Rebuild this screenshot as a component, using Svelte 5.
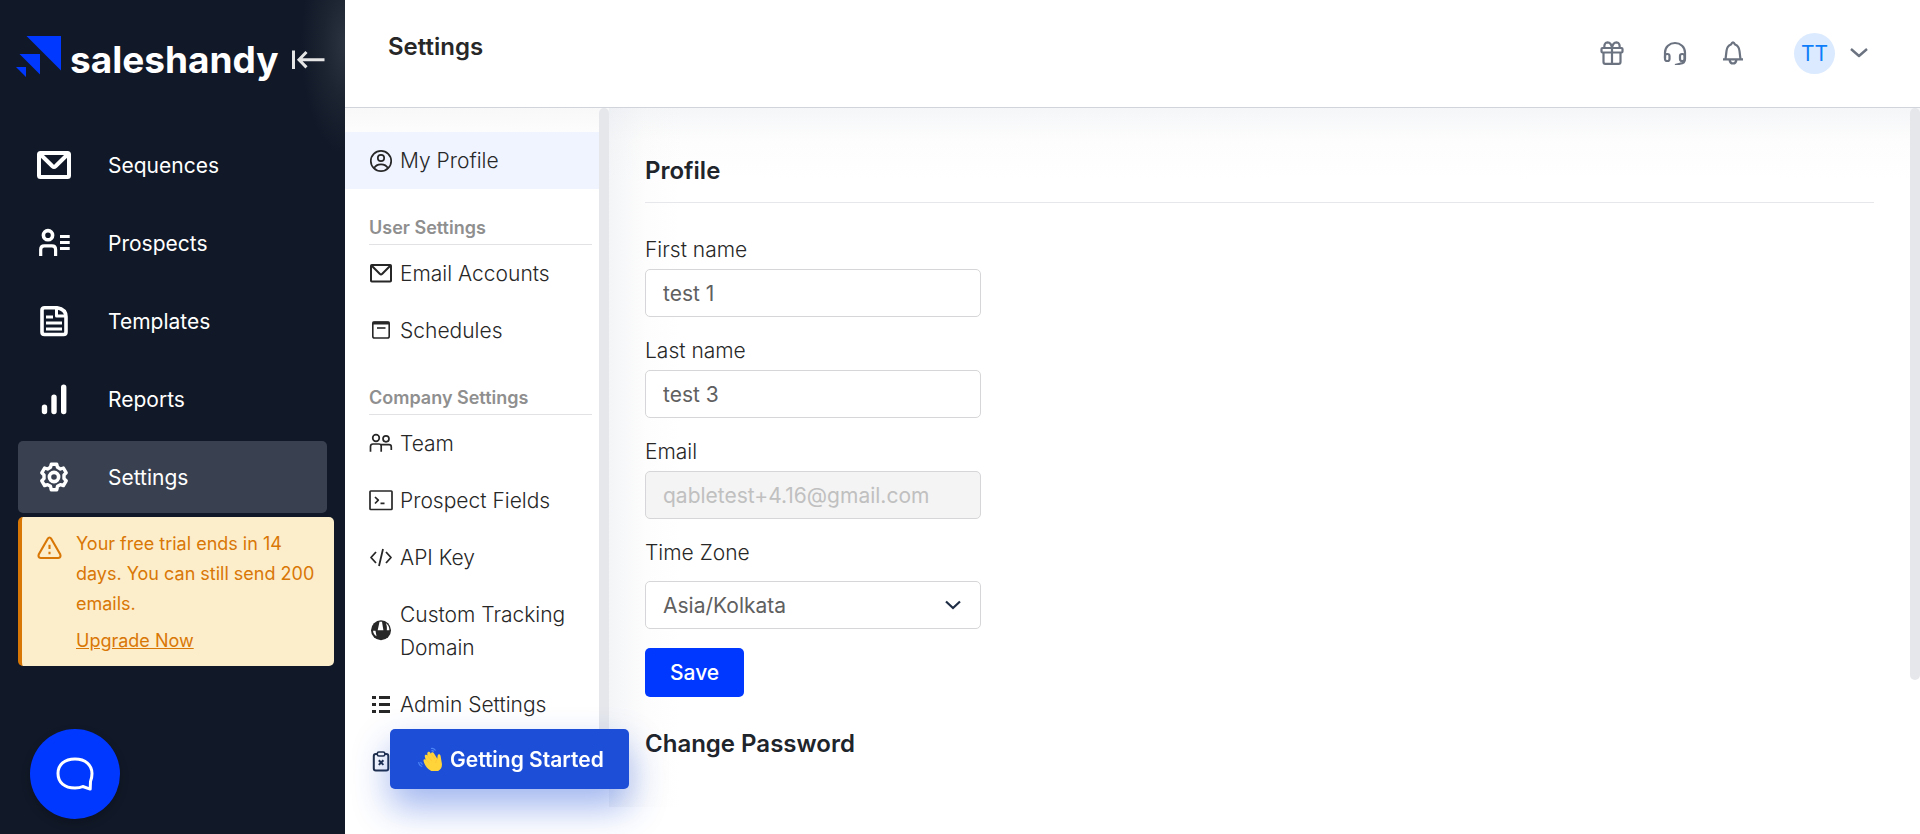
<script>
  let firstName = $state('test 1');
  let lastName = $state('test 3');
  let zone = $state('Asia/Kolkata');

  const nav = [
    { id: 'mail', label: 'Sequences' },
    { id: 'prospects', label: 'Prospects' },
    { id: 'templates', label: 'Templates' },
    { id: 'reports', label: 'Reports' },
    { id: 'gear', label: 'Settings', active: true }
  ];

  const groups = [
    {
      title: 'User Settings',
      items: [
        { id: 'mail', label: 'Email Accounts' },
        { id: 'schedule', label: 'Schedules' }
      ]
    },
    {
      title: 'Company Settings',
      items: [
        { id: 'team', label: 'Team' },
        { id: 'terminal', label: 'Prospect Fields' },
        { id: 'code', label: 'API Key' },
        { id: 'globe', label: 'Custom Tracking Domain' },
        { id: 'list', label: 'Admin Settings' },
        { id: 'clipboard', label: '' }
      ]
    }
  ];
</script>

{#snippet navIcon(id)}
  <svg class="nav-icon" viewBox="0 0 36 36" fill="none" stroke="currentColor" stroke-width="4" stroke-linejoin="round" aria-hidden="true">
    {#if id === 'mail'}
      <rect x="3" y="6" width="30" height="24" rx="1.5" />
      <path d="M4 7l12.500 12.300q1.500 1.400 3 0L32 7" />
    {:else if id === 'prospects'}
      <g stroke-width="3.600">
        <circle cx="12" cy="10.200" r="4.600" />
        <path d="M4.700 31v-6.500q0-3.700 3.700-3.700h7.500q3.700 0 3.700 3.700V31" stroke-width="3.200" />
        <path d="M24 11.500h9.700M24 17.500h9.700M24 23.500h9.700" stroke-width="3" />
      </g>
    {:else if id === 'templates'}
      <path d="M8.500 4.700H21q9 1.500 9 9V29q0 2.500-2.500 2.500h-19Q6 31.500 6 29V7q0-2.300 2.500-2.300z" stroke-width="3.600" />
      <path d="M20.500 4.500V13h9" stroke-width="3" />
      <path d="M10 14h7M10 20h16M10 26h16" stroke-width="3" />
    {:else if id === 'reports'}
      <g stroke-width="5.400" stroke-linecap="round">
        <path d="M8.500 26.300v4.300M18 16.300v14.300M27.700 6.300v24.300" />
      </g>
    {:else}
      <path stroke-width="3.400" d="M14.500 7.500L15.300 4.500h5.400l.8 3 2.900 1.700 3-1 2.800 4.800-2.200 2.200v3.600l2.200 2.200-2.800 4.800-3-1-2.900 1.700-.8 3.500h-5.400l-.8-3.500-2.900-1.700-3 1L5.800 21l2.200-2.200v-3.600L5.800 13l2.800-4.800 3 1z" transform="translate(0 .8)" />
      <circle cx="18" cy="18" r="4.600" stroke-width="3.600" />
    {/if}
  </svg>
{/snippet}

{#snippet menuIcon(id)}
  <svg class="menu-icon" viewBox="0 0 24 24" fill="none" stroke="currentColor" stroke-width="2" stroke-linejoin="round" aria-hidden="true">
    {#if id === 'user'}
      <g stroke-width="1.700"><circle cx="12" cy="12" r="10.200" /><circle cx="12" cy="9" r="3.200" /><path d="M5 19.300q2-4 7-4t7 4" /></g>
    {:else if id === 'mail'}
      <rect x="2" y="3" width="20" height="16.500" rx=".8" /><path d="M2.500 3.500l8.200 8.300q1.300 1.200 2.600 0L21.500 3.500" />
    {:else if id === 'schedule'}
      <rect x="3.800" y="3" width="16.400" height="16" rx="1.800" stroke-width="1.600" /><path d="M3.500 4h17" stroke-width="3" /><path d="M8 9h8.500" stroke-width="1.600" />
    {:else if id === 'team'}
      <g stroke-width="1.700"><circle cx="7" cy="6" r="3.300" /><circle cx="17" cy="6.800" r="3" /><path d="M1.500 19.800v-5.300q0-2.500 2.500-2.500h6q2.200 0 2.200 2.200v5.600M12 12.700h8q2.300 0 2.300 2.300v3" /></g>
    {:else if id === 'terminal'}
      <rect x="1" y="2" width="22" height="18.500" rx=".8" stroke-width="1.700" /><path d="M6 8l3.300 3.200L6 14.500M11.500 14.300h4" stroke-width="1.700" />
    {:else if id === 'code'}
      <path d="M7 6L2 11.500 7 17M17 6l5 5.500-5 5.500M14 3l-4 17" stroke-width="1.800" />
    {:else if id === 'globe'}
      <circle cx="12" cy="11.300" r="10" fill="currentColor" stroke="none" />
      <path d="M10.500 2.800L8.700 11.300h5.700L13 2.800zM16.800 4.100c1.200 2.700 1.200 5 1 7.200h2.600c0-3-1.200-5.500-3.600-7.200zM4 11.800h2.500l1 5.500c-2-1.200-3.300-3-3.500-5.500z" fill="#fff" stroke="none" />
    {:else if id === 'list'}
      <path d="M3 4.500h4M3 11.500h4M3 18.500h4M10 4.500h11M10 11.500h11M10 18.500h11" stroke-width="3" />
    {:else}
      <g stroke="#1f2d44"><rect x="4.800" y="4" width="14.500" height="16.500" rx="2" /><rect x="8.300" y="2" width="7.500" height="4" rx="1.600" fill="#fff" stroke-width="1.600" /><path d="M9.800 10.300l4.600 4.600M14.400 10.300l-4.600 4.600" /></g>
    {/if}
  </svg>
{/snippet}

{#snippet menuItem(id, label, active)}
  <a class="menu-item" class:current={active} href="#{id}" aria-label={label || 'More'}>
    {@render menuIcon(id)}
    <span>{label}</span>
  </a>
{/snippet}

<div class="app">
  <aside class="sidebar">
    <div class="brand">
      <svg class="logo" viewBox="0 0 46 42" aria-hidden="true">
        <path d="M10.500 0H45v34.500zM3.500 18H24v20.500zM0 31h10v10z" fill="#0038ff" />
      </svg>
      <span class="wordmark">saleshandy</span>
      <button class="collapse" aria-label="Collapse menu">
        <svg viewBox="0 0 34 20" fill="none" stroke="#e5e5e5" stroke-width="3" aria-hidden="true">
          <path d="M2.500.5v18.500M33.500 9.700H8M15.500 2L8 9.700l7.500 7.700" />
        </svg>
      </button>
    </div>
    <nav class="main-nav">
      {#each nav as item}
        <a class="nav-item" class:selected={item.active} href="#{item.label}">
          {@render navIcon(item.id)}
          <span>{item.label}</span>
        </a>
      {/each}
    </nav>
    <div class="trial">
      <svg viewBox="0 0 26 24" fill="none" stroke="currentColor" stroke-width="2.200" stroke-linejoin="round" aria-hidden="true">
        <path d="M11.200 2.300q1.800-2.400 3.600 0l9.300 16.200q1.300 3.400-2 3.900H3.900q-3.300-.5-2-3.900z" /><path d="M13 8.500v4.500M13 16v2.500" />
      </svg>
      <div>
        <p>Your free trial ends in 14 days. You can still send 200 emails.</p>
        <a href="#upgrade">Upgrade Now</a>
      </div>
    </div>
  </aside>

  <div class="page">
    <header class="topbar">
      <h1>Settings</h1>
      <div class="tools">
        <button aria-label="Rewards">
          <svg viewBox="0 0 24 24"><rect x="1.500" y="7" width="21" height="4.500" rx="1" /><path d="M3.500 11.500V21q0 1.800 1.800 1.800h13.400q1.800 0 1.800-1.800v-9.500M12 7v15.500M12 7C11.500 3 9.800 1.300 7.500 1.300 4.500 1.500 4 4.500 4.500 7M12 7c.5-4 2.200-5.700 4.500-5.700 3 .2 3.500 3.200 3 5.700" /></svg>
        </button>
        <button aria-label="Support">
          <svg viewBox="0 0 24 24"><path d="M2 17v-5.500C2 6 6.500 2 12 2s10 4 10 9.500V18q0 4.500-5 4.700L12 24" /><rect x="2" y="13" width="4.500" height="7" rx="2" /><rect x="17" y="13" width="4.500" height="7" rx="2" /></svg>
        </button>
        <button aria-label="Notifications">
          <svg viewBox="0 0 24 24"><path d="M2 18.300h20M4.500 18.300L5.500 10q.5-5 4.500-6.500Q11 1.300 12 1.300t2 2.200q4 1.500 4.500 6.500l1 8.300M8.500 18.500q.5 4 3.500 4t3.500-4" /></svg>
        </button>
        <button class="account" aria-label="Account">
          <span class="avatar">TT</span>
          <svg viewBox="0 0 18 18"><path d="M1 5l8 7 8-7" stroke-width="2.400" /></svg>
        </button>
      </div>
    </header>

    <div class="body">
      <div class="settings-nav">
        <nav class="menu">
          {@render menuItem('user', 'My Profile', true)}
          {#each groups as group}
            <h2>{group.title}</h2>
            {#each group.items as item}
              {@render menuItem(item.id, item.label, false)}
            {/each}
          {/each}
        </nav>
        <div class="track menu-track"></div>
      </div>

      <main class="content">
        <form class="profile" onsubmit={(e) => e.preventDefault()}>
          <h2 class="ruled">Profile</h2>
          <div class="field">
            <label for="first">First name</label>
            <input id="first" type="text" bind:value={firstName} />
          </div>
          <div class="field">
            <label for="last">Last name</label>
            <input id="last" type="text" bind:value={lastName} />
          </div>
          <div class="field">
            <label for="email">Email</label>
            <input id="email" type="email" value="qabletest+4.16@gmail.com" disabled />
          </div>
          <div class="field zone">
            <label for="zone">Time Zone</label>
            <div class="select">
              <select id="zone" bind:value={zone}><option>Asia/Kolkata</option></select>
              <svg viewBox="0 0 18 18" fill="none" stroke="#1f2d44" stroke-width="2.200" aria-hidden="true"><path d="M2 5.500l7 6.500 7-6.500" /></svg>
            </div>
          </div>
          <button class="save" type="submit">Save</button>
          <h2>Change Password</h2>
        </form>
        <div class="track main-track"></div>
      </main>
    </div>
  </div>

  <button class="chat" aria-label="Open chat">
    <svg viewBox="0 0 38 34" fill="none" stroke="#fff" stroke-width="3" stroke-linejoin="round" aria-hidden="true">
      <path d="M34.500 24.500l-.3 7.600-7.400-2.600q-3 1.500-7.800 1.500C8.500 31 2 25.500 2 16.500S8.500 2 19 2s17 6 17 14.500q0 4.500-1.500 8z" />
    </svg>
  </button>

  <button class="started">
    <svg viewBox="0 0 24 24" aria-hidden="true">
      <path d="M8.800 21c-2.500-2-4-5.200-4.700-7.700-.5-1.800 1-2.700 2-1.500l-.8-3.300c-.4-1.800 1.800-2.500 2.700-1L7.800 5.700c-.2-1.800 2-2.600 3-1l.6 1c.3-1.500 2-2 3-.5l3.400 5.600.3-3c.3-2 2.600-2.300 3 .3l1.200 7c.7 4-1 7-4.600 8.300-3.400 1.100-6.400-.2-8.900-2.400z" transform="translate(1.500 1)" fill="#ffd43b" />
      <path d="M7.700 12.500l4 4M9.500 8.700l4.700 5.500M13 6.800l4 5.200M19.300 12q-1.800 2-1.500 4" fill="none" stroke="#fbb930" stroke-width=".5" />
      <path d="M13 1.500q3-.8 4.500 2M13.500 3.600q1.500-.2 2.300 1M.7 15q.2 3.500 3.500 4.500M2.700 15q.3 1.700 2 2.500" fill="none" stroke="#4c86f5" stroke-width="1.200" />
    </svg>
    Getting Started
  </button>
</div>

<style>
  :global(body) {
    background: #fff;
    font-family: Inter, sans-serif;
    color: #272727;
  }
  * {
    box-sizing: border-box;
  }
  button {
    font-family: inherit;
    border: 0;
    padding: 0;
    background: none;
    cursor: pointer;
  }
  a {
    color: inherit;
    text-decoration: none;
  }
  h1,
  h2,
  p {
    margin: 0;
  }
  svg {
    display: block;
    flex: none;
  }
  .app {
    display: flex;
    min-height: 100vh;
  }
  .sidebar {
    flex: 0 0 345px;
    padding: 0 18px;
    background: radial-gradient(ellipse 44px 110px at 100% 44px, #2b3240 0%, #1c2331 50%, #111827 100%) #111827;
    color: #fff;
  }
  .brand {
    display: flex;
    align-items: center;
    height: 129px;
    padding-bottom: 16px;
    margin-left: -2px;
  }
  .logo {
    width: 46px;
    height: 42px;
  }
  .wordmark {
    flex: 1;
    margin-left: 8px;
    padding-top: 6px;
    font-size: 37px;
    font-weight: 700;
    line-height: 44px;
  }
  .collapse svg {
    width: 34px;
    height: 20px;
    margin: 6px 2px 0 0;
  }
  .main-nav {
    display: flex;
    flex-direction: column;
    gap: 6px;
  }
  .nav-item {
    display: flex;
    align-items: center;
    gap: 36px;
    height: 72px;
    padding-left: 18px;
    border-radius: 5px;
    font-size: 21px;
  }
  .nav-item.selected {
    background: #394150;
  }
  .nav-icon {
    width: 36px;
    height: 36px;
  }
  .trial {
    display: flex;
    gap: 14px;
    margin: 4px -7px 0 0;
    padding: 12px 12px 10px 15px;
    border-left: 4px solid #d97706;
    border-radius: 5px;
    background: #fceecb;
    color: #d97706;
    font-size: 18px;
    font-weight: 400;
    line-height: 30px;
  }
  .trial svg {
    width: 25px;
    height: 24px;
    margin-top: 7px;
  }
  .trial a {
    display: block;
    margin-top: 7px;
    text-decoration: underline;
  }
  .page {
    flex: 1;
    min-width: 0;
    display: flex;
    flex-direction: column;
  }
  .topbar {
    display: flex;
    justify-content: space-between;
    height: 108px;
    padding: 32px 52px 0 43px;
    border-bottom: 1px solid #d1d5db;
  }
  h1,
  .content h2 {
    font-size: 24px;
    font-weight: 600;
    line-height: 30px;
  }
  .tools {
    display: flex;
    align-items: center;
    align-self: flex-start;
    gap: 34px;
    height: 42px;
    color: #6b7280;
  }
  .tools button {
    color: inherit;
  }
  .tools button:first-child {
    margin-right: 5px;
  }
  .tools svg {
    width: 24px;
    height: 24px;
    fill: none;
    stroke: currentColor;
    stroke-width: 2.2;
    stroke-linejoin: round;
  }
  .tools .account {
    display: flex;
    align-items: center;
    gap: 15px;
    margin-left: 15px;
  }
  .tools .account svg {
    width: 18px;
    height: 18px;
  }
  .avatar {
    display: grid;
    place-items: center;
    width: 41px;
    height: 41px;
    border-radius: 50%;
    background: #dbeafe;
    color: #0d7dfa;
    font-size: 21px;
  }
  .body {
    flex: 1;
    display: flex;
    padding-bottom: 27px;
  }
  .settings-nav {
    flex: 0 0 264px;
    display: flex;
    background: linear-gradient(#f8f8f8, #fff 36px);
  }
  .menu {
    flex: 1;
    padding-top: 24px;
  }
  .menu-item {
    display: flex;
    align-items: center;
    gap: 7px;
    min-height: 57px;
    padding: 12px 20px 12px 24px;
    font-size: 21px;
    font-weight: 300;
    line-height: 33px;
  }
  .menu-item.current {
    background: #eff4ff;
  }
  .menu-icon {
    width: 24px;
    height: 24px;
  }
  .menu h2 {
    margin: 26px 7px 0 24px;
    padding-bottom: 3px;
    border-bottom: 1px solid #e2e2e4;
    color: #8f8f8f;
    font-size: 18px;
    font-weight: 600;
    line-height: 26px;
  }
  .track {
    flex: 0 0 10px;
    border-radius: 5px;
    background: #e5e7eb;
  }
  .menu-track {
    height: 670px;
  }
  .main-track {
    height: 572px;
  }
  .content {
    flex: 1;
    display: flex;
    min-width: 0;
    background:
      linear-gradient(90deg, rgb(226 230 236 / 0.4), rgb(240 240 240 / 0.15) 36px, transparent 72px),
      linear-gradient(rgb(226 230 236 / 0.36), rgb(240 240 240 / 0.15) 32px, transparent 72px);
  }
  .profile {
    flex: 1;
    padding: 48px 36px 0;
  }
  .content h2 {
    color: #20242b;
  }
  .ruled {
    padding-bottom: 16px;
    margin-bottom: 32px;
    border-bottom: 1px solid #e5e7eb;
  }
  .field {
    width: 336px;
    margin-bottom: 19px;
    font-size: 21px;
    font-weight: 300;
  }
  label {
    display: block;
    margin-bottom: 4px;
    line-height: 30px;
  }
  .zone label {
    margin-bottom: 13px;
  }
  input,
  select {
    display: block;
    width: 100%;
    height: 48px;
    padding: 1px 17px 0;
    border: 1px solid #d6d6d8;
    border-radius: 5px;
    background: #fff;
    color: #606060;
    font: inherit;
    font-weight: 400;
    appearance: none;
  }
  input:disabled {
    background: #f4f4f4;
    color: #c0c0c0;
    opacity: 1;
  }
  .select {
    display: grid;
    align-items: center;
  }
  .select > * {
    grid-area: 1 / 1;
  }
  .select svg {
    width: 18px;
    height: 18px;
    margin-right: 19px;
    justify-self: end;
    pointer-events: none;
  }
  .save {
    display: block;
    height: 49px;
    padding: 0 25px;
    margin-bottom: 32px;
    border-radius: 5px;
    background: #0038ff;
    color: #fff;
    font-size: 21px;
    font-weight: 500;
  }
  .chat {
    position: fixed;
    left: 30px;
    bottom: 15px;
    display: grid;
    place-items: center;
    width: 90px;
    height: 90px;
    border-radius: 50%;
    background: #0038ff;
    box-shadow: 0 4px 10px rgb(0 0 0 / 0.2);
  }
  .chat svg {
    width: 38px;
    height: 34px;
  }
  .started {
    position: fixed;
    left: 390px;
    bottom: 45px;
    display: flex;
    align-items: center;
    gap: 8px;
    height: 60px;
    padding: 0 25px 0 28px;
    border-radius: 5px;
    background: #1d4ed8;
    color: #fff;
    font-size: 21px;
    font-weight: 600;
    box-shadow: 0 18px 36px rgb(29 78 216 / 0.42);
  }
  .started svg {
    width: 24px;
    height: 24px;
  }
</style>
